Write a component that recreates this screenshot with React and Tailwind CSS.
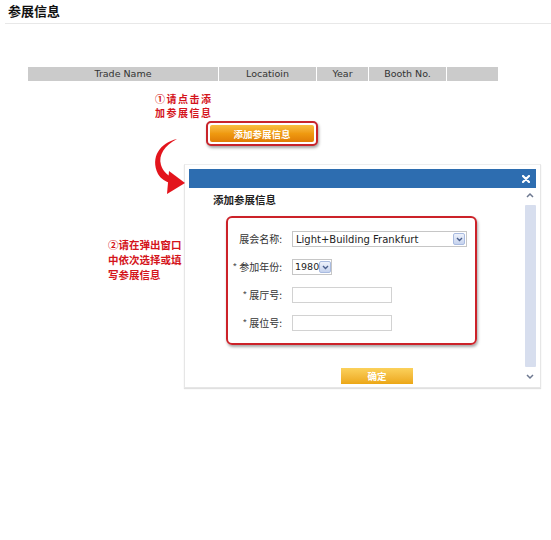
import React from 'react'

const cn = '"Noto Sans CJK SC", "DejaVu Sans", sans-serif'
const lat = '"DejaVu Sans", "Noto Sans CJK SC", sans-serif'

function Field({ label, star, children }) {
  return (
    <div className="flex items-center h-[16px]">
      <div className="w-[64px] pr-[10px] text-right text-[10px] leading-[14px] text-[#333] whitespace-nowrap" style={{ fontFamily: cn }}>
        {star && <span className="text-[#555] mr-[2px]">*</span>}
        {label}
      </div>
      {children}
    </div>
  )
}

function Chevron() {
  return (
    <span className="flex items-center justify-center shrink-0 w-[12px] h-[12px] mr-[1px] bg-gradient-to-b from-[#eef2fb] to-[#c6d3ee] border border-[#a9bbe0] rounded-[2px]">
      <svg width="7" height="5" viewBox="0 0 7 5"><path d="M1 1l2.5 2.5L6 1" stroke="#4a5f8c" strokeWidth="1.4" fill="none" /></svg>
    </span>
  )
}

export default function App() {
  return (
    <div className="relative w-[551px] h-[540px] bg-white overflow-hidden" style={{ fontFamily: cn }}>
      {/* header */}
      <div className="ml-[5px] h-[24px] border-b border-[#e8e8e8] pl-[3px] pt-[3px]">
        <h1 className="text-[13px] leading-[16px] font-bold text-[#111]">参展信息</h1>
      </div>

      {/* table header */}
      <div className="ml-[28px] mt-[43px] w-[470px] h-[14px] grid grid-cols-[190px_97px_51px_77px_51px] gap-x-[1px] text-[9.5px] leading-[14px] text-[#333]" style={{ fontFamily: lat }}>
        <div className="bg-[#cbcbcb] text-center">Trade Name</div>
        <div className="bg-[#cbcbcb] text-center">Locatioin</div>
        <div className="bg-[#cbcbcb] text-center">Year</div>
        <div className="bg-[#cbcbcb] text-center">Booth No.</div>
        <div className="bg-[#cbcbcb]" />
      </div>

      {/* note 1 */}
      <div className="ml-[155px] mt-[11px] text-[10px] leading-[14px] font-bold text-[#d4141b] tracking-[1.5px]">
        <p>①请点击添</p>
        <p>加参展信息</p>
      </div>

      {/* add button */}
      <div className="ml-[206px] mt-[1px] w-[112px] h-[25px] rounded-[5px] border-2 border-[#c8242b] shadow-[1px_2px_3px_rgba(0,0,0,0.35)] p-[2px] bg-white">
        <div className="h-full rounded-[2px] bg-gradient-to-b from-[#f8c040] via-[#ef9a10] to-[#e07c06] flex items-center justify-center text-white text-[9.5px] leading-[12px] font-bold">
          添加参展信息
        </div>
      </div>

      {/* dialog row */}
      <div className="flex mt-[18px]">
        <div className="ml-[108px] mt-[73px] w-[76px] text-[10.5px] leading-[15px] font-bold text-[#d4141b]">
          <p className="whitespace-nowrap">②请在弹出窗口</p>
          <p className="whitespace-nowrap">中依次选择或填</p>
          <p className="whitespace-nowrap">写参展信息</p>
        </div>

        <div className="w-[357px] h-[224px] border border-[#e6e6e6] border-t-[#eeeeee] pt-[4px] pl-[4px] pr-[4px] shadow-[0_1px_1px_rgba(0,0,0,0.12)]">
          <div className="h-[19px] bg-[#2d6db0] flex items-center justify-end pr-[6px]">
            <svg width="8" height="8" viewBox="0 0 8 8"><path d="M1 1l6 6M7 1L1 7" stroke="#fff" strokeWidth="2.2" strokeLinecap="round" /></svg>
          </div>
          <div className="flex h-[196px]">
            <div className="flex-1 flex flex-col">
              <p className="ml-[24px] mt-[5px] text-[10.5px] leading-[14px] font-bold text-[#222]">添加参展信息</p>

              <div className="ml-[37px] mt-[9px] w-[251px] h-[131px] rounded-[6px] border-2 border-[#cc2229] shadow-[1px_2px_3px_rgba(0,0,0,0.35)] pt-[13px] flex flex-col gap-[12px]">
                <Field label="展会名称:">
                  <div className="w-[175px] h-[16px] border border-[#c6c6c6] flex items-center justify-between pl-[3px]">
                    <span className="text-[10px] text-[#222]" style={{ fontFamily: lat }}>Light+Building Frankfurt</span>
                    <Chevron />
                  </div>
                </Field>
                <Field label="参加年份:" star>
                  <div className="w-[40px] h-[16px] border border-[#c6c6c6] flex items-center justify-between pl-[2px]">
                    <span className="text-[9.5px] text-[#222]" style={{ fontFamily: lat }}>1980</span>
                    <Chevron />
                  </div>
                </Field>
                <Field label="展厅号:" star>
                  <div className="w-[100px] h-[16px] border border-[#d2d2d2]" />
                </Field>
                <Field label="展位号:" star>
                  <div className="w-[100px] h-[16px] border border-[#d2d2d2]" />
                </Field>
              </div>

              <div className="ml-[152px] mt-[23px] w-[72px] h-[16px] bg-gradient-to-b from-[#fbd15a] to-[#eca712] flex items-center justify-center text-white text-[9.5px] font-bold">
                确定
              </div>
            </div>

            {/* scrollbar */}
            <div className="w-[12px] flex flex-col items-center pt-[3px] pb-[3px]">
              <svg width="10" height="8" viewBox="0 0 10 8"><path d="M2 6l3-3 3 3" stroke="#6d7890" strokeWidth="1.5" fill="none" /></svg>
              <div className="flex-1 w-[11px] mt-[6px] mb-[6px] bg-[#d7deee] rounded-[1px]" />
              <svg width="10" height="8" viewBox="0 0 10 8"><path d="M2 2l3 3 3-3" stroke="#6d7890" strokeWidth="1.5" fill="none" /></svg>
            </div>
          </div>
        </div>
      </div>

      {/* curved arrow annotation */}
      <svg className="absolute left-[145px] top-[135px]" width="50" height="60" viewBox="0 0 50 60">
        <path d="M32 4 C15 8 5 22 13 39 C16 44 21 47 26 48 L27 42 C22 40 18 36 16 30 C13 20 20 10 32 4 Z" fill="#e3141c" />
        <path d="M24 36 L40 48 L22 59 Z" fill="#e3141c" />
      </svg>
    </div>
  )
}
